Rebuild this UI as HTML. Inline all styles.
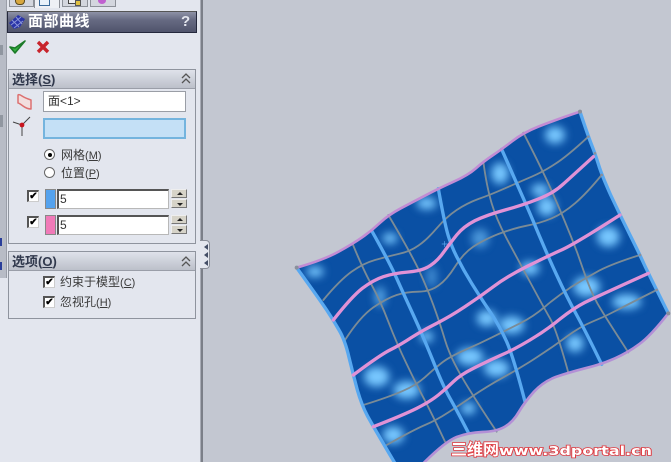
<!DOCTYPE html>
<html><head><meta charset="utf-8"><style>
html,body{margin:0;padding:0}
body{width:671px;height:462px;overflow:hidden;position:relative;background:#c3c7d1;font-family:"Liberation Sans","Noto Sans CJK SC",sans-serif;color:#222}
div{position:absolute;box-sizing:border-box}
.hd{font-size:13px;font-weight:bold;color:#30384c;left:3px;top:1px;line-height:17px;white-space:nowrap}
.t{font-size:12px;line-height:14px;color:#3a3a3a;white-space:nowrap}
.t span{font-size:11px}
.grp{background:#e3e6ee;border:1px solid #8f949e}
.ghead{left:0;right:0;top:0;height:19px;background:linear-gradient(#dfe2ea,#bcc0ca);border-bottom:1px solid #9a9ea8}
.inp{background:#fff;border:1px solid #b8b8b8;border-top:2px solid #555;border-left:2px solid #555;font-size:12px;line-height:17px;padding-left:1px;color:#333}
.cb{width:12px;height:12px;background:#fff;border:2px solid #555;border-right:1px solid #ccc;border-bottom:1px solid #ccc;font-size:10px;line-height:9px;font-weight:bold;color:#000;text-align:center}
.sp{width:16px;height:9px;background:#d6d3c8;border:1px solid #777;border-top-color:#eee;border-left-color:#eee}
</style></head><body>
<svg width="671" height="462" style="position:absolute;left:0;top:0" xmlns="http://www.w3.org/2000/svg">
<defs>
<filter id="b" x="-150%" y="-150%" width="400%" height="400%"><feGaussianBlur stdDeviation="13"/></filter>
<clipPath id="c"><path d="M50 503Q130 480 174 456Q218 432 246.5 412Q275 392 300 368.5Q325 345 362.5 325Q400 305 437.5 285.5Q475 266 520 245.5Q565 225 587.5 205Q610 185 637.5 166.5Q665 148 697.5 123Q730 98 775 80Q820 62 900 35Q925 110 935 135Q945 160 955 192Q965 225 992 285Q1020 345 1050 405Q1080 465 1092 492Q1105 520 1165 640Q1110 710 1077 733Q1045 757 1005 775Q965 793 915 805Q865 818 827 831Q790 845 762 875Q735 905 717 935Q700 965 675 980Q650 995 607 996Q565 998 530 1011Q495 1025 430 1090L345 1090Q280 980 262 947Q245 915 232 870Q220 825 207 772Q195 720 177 690Q160 660 140 630Q120 600 50 503Z"/></clipPath>
</defs>
<g transform="translate(280 100) scale(.33333)" fill="none" stroke-linejoin="round" stroke-linecap="round">
<g clip-path="url(#c)">
<rect x="0" y="0" width="1173" height="1086" fill="#0a50a4"/>
<g fill="#78c8ff" filter="url(#b)">
<ellipse cx="105" cy="515" rx="26" ry="16"/><ellipse cx="330" cy="415" rx="22" ry="16"/><ellipse cx="440" cy="310" rx="30" ry="18"/><ellipse cx="660" cy="220" rx="26" ry="32"/><ellipse cx="825" cy="105" rx="30" ry="26"/><ellipse cx="780" cy="270" rx="26" ry="18"/><ellipse cx="800" cy="320" rx="28" ry="28"/><ellipse cx="600" cy="415" rx="26" ry="28" opacity=".6"/><ellipse cx="455" cy="530" rx="16" ry="32" opacity=".5"/><ellipse cx="300" cy="590" rx="16" ry="30" opacity=".7"/><ellipse cx="440" cy="710" rx="20" ry="16"/><ellipse cx="750" cy="505" rx="28" ry="20"/><ellipse cx="985" cy="410" rx="34" ry="30"/><ellipse cx="620" cy="655" rx="30" ry="24"/><ellipse cx="695" cy="675" rx="38" ry="26"/><ellipse cx="570" cy="770" rx="40" ry="26"/><ellipse cx="650" cy="805" rx="38" ry="26"/><ellipse cx="290" cy="830" rx="38" ry="30"/><ellipse cx="380" cy="870" rx="40" ry="26"/><ellipse cx="885" cy="730" rx="26" ry="26"/><ellipse cx="920" cy="560" rx="40" ry="30"/><ellipse cx="1040" cy="605" rx="44" ry="22"/><ellipse cx="565" cy="925" rx="22" ry="18"/><ellipse cx="340" cy="1005" rx="32" ry="26"/>
</g>
</g>
<g stroke="#7b8b96" stroke-width="5.5">
<path d="M130 600Q180 540 215 515Q250 490 285 480Q320 470 355 462Q390 455 415 437Q440 420 470 385Q500 350 530 330Q560 310 595 297Q630 285 675 265Q720 245 755 230Q790 215 825 192Q860 170 925 110"/>
<path d="M195 720Q240 650 280 622Q320 595 350 585Q380 575 415 575Q450 575 475 557Q500 540 525 500Q550 460 580 440Q610 420 655 402Q700 385 740 377Q780 370 815 355Q850 340 885 310Q920 280 965 225"/>
<path d="M250 915Q330 890 370 872Q410 855 440 827Q470 800 490 785Q510 770 555 750Q600 730 640 710Q680 690 720 670Q760 650 795 620Q830 590 872 562Q915 535 957 512Q1000 490 1080 465"/>
<path d="M320 1035Q400 990 435 975Q470 960 505 937Q540 915 580 887Q620 860 670 832Q720 805 770 772Q820 740 860 710Q900 680 937 665Q975 650 1012 630Q1050 610 1130 570"/>
<path d="M218 432Q250 510 275 555Q300 600 325 665Q350 730 380 792Q410 855 435 902Q460 950 495 1025"/>
<path d="M325 345Q390 455 415 507Q440 560 460 615Q480 670 495 720Q510 770 545 830Q580 890 650 995"/>
<path d="M610 185Q620 260 635 310Q650 360 685 425Q720 490 755 555Q790 620 810 655Q830 690 865 818"/>
<path d="M730 98Q790 215 817 277Q845 340 867 395Q890 450 910 510Q930 570 952 610Q975 650 1045 757"/>
</g>
<g stroke="#58a8f0" stroke-width="10">
<path d="M275 392Q330 490 350 535Q370 580 400 645Q430 710 460 785Q490 860 510 895Q530 930 565 998"/>
<path d="M475 266Q490 350 500 390Q510 430 530 470Q550 510 575 550Q600 590 630 635Q660 680 680 725Q700 770 735 905"/>
<path d="M665 148Q710 250 730 295Q750 340 775 400Q800 460 830 525Q860 590 890 645Q920 700 965 793"/>
<path d="M50 503Q120 600 140 630Q160 660 177 690Q195 720 207 772Q220 825 232 870Q245 915 262 947Q280 980 345 1090"/>
<path d="M900 35Q925 110 935 135Q945 160 955 192Q965 225 992 285Q1020 345 1050 405Q1080 465 1092 492Q1105 520 1165 640"/>
</g>
<g stroke-width="8">
<path stroke="#c28cd4" d="M50 503Q130 480 174 456Q218 432 246.5 412Q275 392 300 368.5Q325 345 362.5 325Q400 305 437.5 285.5Q475 266 520 245.5Q565 225 587.5 205Q610 185 637.5 166.5Q665 148 697.5 123Q730 98 775 80Q820 62 900 35"/>
<path stroke="#b490d6" d="M1165 640Q1110 710 1077 733Q1045 757 1005 775Q965 793 915 805Q865 818 827 831Q790 845 762 875Q735 905 717 935Q700 965 675 980Q650 995 607 996Q565 998 530 1011Q495 1025 430 1090"/>
</g>
<g stroke="#e092d6" stroke-width="10">
<path d="M160 660Q215 590 247 565Q280 540 310 530Q340 520 385 516Q430 512 452 496Q475 480 492 455Q510 430 530 405Q550 380 585 362Q620 345 675 330Q730 315 775 297Q820 280 850 252Q880 225 940 170"/>
<path d="M220 825Q300 765 330 750Q360 735 395 712Q430 690 470 670Q510 650 555 620Q600 590 640 560Q680 530 740 500Q800 470 840 452Q880 435 1020 345"/>
<path d="M280 980Q370 945 410 925Q450 905 475 885Q500 865 520 845Q540 825 580 805Q620 785 660 767Q700 750 750 720Q800 690 840 657Q880 625 915 607Q950 590 1105 520"/>
</g>
<g fill="#8a8f9c"><circle cx="50" cy="503" r="6"/><circle cx="900" cy="35" r="6"/><circle cx="1165" cy="640" r="6"/><circle cx="925" cy="110" r="4"/><circle cx="945" cy="160" r="4"/><circle cx="965" cy="225" r="4"/><circle cx="1080" cy="465" r="4"/><circle cx="1130" cy="570" r="4"/></g>
<path d="M486 432h16M494 424v16" stroke="#5aa8f0" stroke-width="2"/>
</g>
<text x="451" y="455" font-family="'Noto Sans CJK SC',sans-serif" font-size="16" font-weight="bold" fill="#fff" stroke="#e0383e" stroke-width="1.6" paint-order="stroke">三维网</text>
<text x="499" y="455" font-family="'DejaVu Sans',sans-serif" font-size="12" font-weight="bold" textLength="153" lengthAdjust="spacingAndGlyphs" fill="#fff" stroke="#e0383e" stroke-width="1.5" paint-order="stroke">www.3dportal.cn</text>
</svg>

<div style="left:0;top:0;width:203px;height:462px;background:#e3e6ee;border-right:2px solid #7b7f88"></div>
<div style="left:200px;top:0;width:1px;height:462px;background:#a8acb6"></div>
<div style="left:0;top:0;width:7px;height:278px;background:#b8bcc6;border-right:1px solid #9a9ea8"></div>
<div style="left:0;top:45px;width:3px;height:10px;background:#9096a0"></div>
<div style="left:0;top:115px;width:3px;height:12px;background:#9096a0"></div>
<div style="left:0;top:238px;width:2px;height:8px;background:#2a3e9a"></div>
<div style="left:0;top:262px;width:2px;height:8px;background:#2a3e9a"></div>

<!-- tabs -->
<div style="left:9px;top:-3px;width:25px;height:10px;background:#d3d6de;border:1px solid #8c9098"></div>
<div style="left:15px;top:-2px;width:10px;height:7px;background:#d8a840;border:1px solid #5a4a20;border-radius:0 0 4px 4px"></div>
<div style="left:34px;top:-3px;width:26px;height:11px;background:#eef0f5;border:1px solid #8c9098;border-bottom:0"></div>
<div style="left:39px;top:-2px;width:11px;height:8px;background:#e8f1fa;border:1px solid #3a6a9a"></div>
<div style="left:62px;top:-3px;width:26px;height:10px;background:#d3d6de;border:1px solid #8c9098"></div>
<div style="left:68px;top:-2px;width:8px;height:6px;background:#eee;border:1px solid #444"></div>
<div style="left:75px;top:0;width:6px;height:6px;background:#e0c040;border:1px solid #555"></div>
<div style="left:90px;top:-3px;width:26px;height:10px;background:#d3d6de;border:1px solid #8c9098"></div>
<div style="left:98px;top:-3px;width:8px;height:7px;background:#c060d0;border-radius:50%"></div>

<!-- title bar -->
<div style="left:7px;top:11px;width:190px;height:22px;background:linear-gradient(#8e92a6,#666a82 40%,#50546c);border:1px solid #24283c;border-top-color:#555"></div>
<svg style="position:absolute;left:8px;top:13px" width="18" height="18" viewBox="0 0 18 18"><path d="M1 10L10 2 17 6 12 14 6 16Z" fill="#2a34a8"/><path d="M4 7l7 7M8 4l6 7M3 12L13 4M6 15L15 8" stroke="#8a94d8" stroke-width="1"/></svg>
<div style="left:28px;top:11px;font-size:15px;line-height:21px;font-weight:bold;color:#fff;letter-spacing:.5px;white-space:nowrap">面部曲线</div>
<div style="left:181px;top:12px;font-size:15px;line-height:20px;font-weight:bold;color:#e4e6ee">?</div>

<svg style="position:absolute;left:8px;top:38px" width="44" height="18" viewBox="0 0 44 18"><path d="M2 9l5 6L17 3 7 10Z" fill="#34b040" stroke="#1c7a28" stroke-width="1.6" stroke-linejoin="round"/><path d="M30 4l10 10M40 4L30 14" stroke="#c8242c" stroke-width="3.4"/></svg>

<!-- selection group -->
<div class="grp" style="left:8px;top:69px;width:188px;height:175px"><div class="ghead"></div><div class="hd">选择(<u>S</u>)</div></div>
<svg style="position:absolute;left:181px;top:73px" width="10" height="11" viewBox="0 0 10 11"><path d="M1 5l4-4 4 4M1 10l4-4 4 4" fill="none" stroke="#555" stroke-width="1.3"/></svg>
<svg style="position:absolute;left:14px;top:92px" width="20" height="20" viewBox="0 0 20 20"><path d="M4 3Q5 2 8 4T17 8L17 17Q13 17 9 14T4 11Z" fill="#f2dede" stroke="#dc7070" stroke-width="1.5" stroke-linejoin="round"/></svg>
<div style="left:43px;top:91px;width:143px;height:21px;background:#fff;border:1px solid #9a9ea6;font-size:12px;line-height:19px;padding-left:4px;color:#333">面&lt;1&gt;</div>
<svg style="position:absolute;left:12px;top:116px" width="22" height="22" viewBox="0 0 22 22"><path d="M1 6l9 3M10 9l8-8M10 9v11" stroke="#444" stroke-width="1" fill="none"/><circle cx="10" cy="9" r="2.4" fill="#c8141e"/></svg>
<div style="left:43px;top:118px;width:143px;height:21px;background:#c4e0f6;border:2px solid #74b4de"></div>

<div style="left:44px;top:149px;width:11px;height:11px;background:#fff;border:1px solid #666;border-radius:50%"></div>
<div style="left:48px;top:153px;width:4px;height:4px;background:#000;border-radius:50%"></div>
<div class="t" style="left:61px;top:148px">网格<span>(<u>M</u>)</span></div>
<div style="left:44px;top:167px;width:11px;height:11px;background:#fff;border:1px solid #666;border-radius:50%"></div>
<div class="t" style="left:61px;top:166px">位置<span>(<u>P</u>)</span></div>

<div class="cb" style="left:27px;top:190px">✔</div>
<div style="left:45px;top:189px;width:11px;height:20px;background:#54a2ee;border:1px solid #888"></div>
<div class="inp" style="left:57px;top:189px;width:112px;height:20px">5</div>
<div class="sp" style="left:171px;top:189px"></div><div class="sp" style="left:171px;top:199px"></div>
<div style="left:177px;top:192px;border:3px solid transparent;border-bottom-color:#222;border-top:0"></div>
<div style="left:177px;top:203px;border:3px solid transparent;border-top-color:#222;border-bottom:0"></div>

<div class="cb" style="left:27px;top:216px">✔</div>
<div style="left:45px;top:215px;width:11px;height:20px;background:#f07ab8;border:1px solid #888"></div>
<div class="inp" style="left:57px;top:215px;width:112px;height:20px">5</div>
<div class="sp" style="left:171px;top:215px"></div><div class="sp" style="left:171px;top:225px"></div>
<div style="left:177px;top:218px;border:3px solid transparent;border-bottom-color:#222;border-top:0"></div>
<div style="left:177px;top:229px;border:3px solid transparent;border-top-color:#222;border-bottom:0"></div>

<!-- options group -->
<div class="grp" style="left:8px;top:251px;width:188px;height:68px"><div class="ghead"></div><div class="hd">选项(<u>O</u>)</div></div>
<svg style="position:absolute;left:181px;top:256px" width="10" height="11" viewBox="0 0 10 11"><path d="M1 5l4-4 4 4M1 10l4-4 4 4" fill="none" stroke="#555" stroke-width="1.3"/></svg>
<div class="cb" style="left:43px;top:276px">✔</div>
<div class="t" style="left:60px;top:275px">约束于模型<span>(<u>C</u>)</span></div>
<div class="cb" style="left:43px;top:296px">✔</div>
<div class="t" style="left:60px;top:295px">忽视孔<span>(<u>H</u>)</span></div>

<!-- handle -->
<div style="left:200px;top:240px;width:10px;height:29px;background:#e3e6ee;border:1px solid #8a8e98;border-left:0;border-radius:0 4px 4px 0"></div>
<svg style="position:absolute;left:203px;top:243px" width="6" height="24" viewBox="0 0 6 24"><path d="M5 1v6L1 4ZM5 9v6L1 12ZM5 17v6L1 20Z" fill="#444e66"/></svg>
</body></html>
